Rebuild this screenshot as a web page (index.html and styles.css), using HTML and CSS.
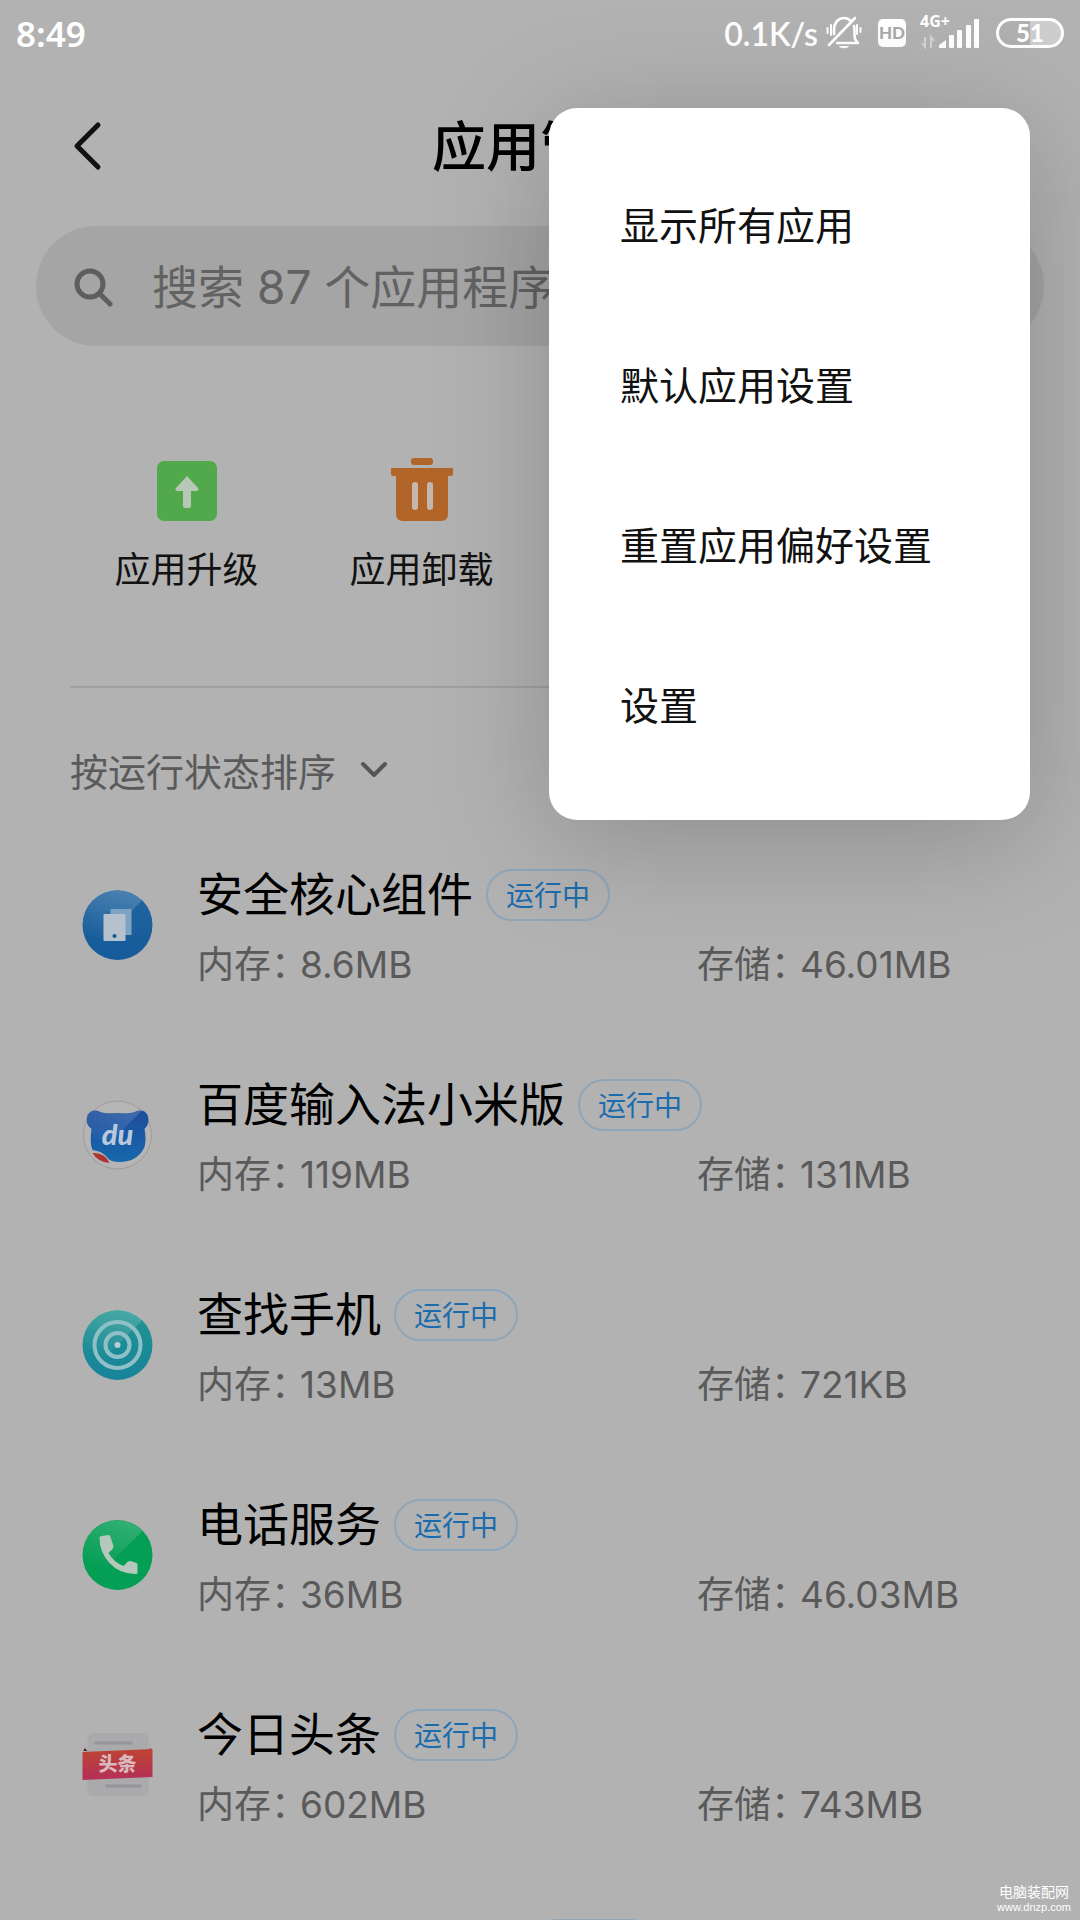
FILE: index.html
```html
<!DOCTYPE html>
<html lang="zh-CN">
<head>
<meta charset="utf-8">
<meta name="viewport" content="width=device-width, initial-scale=1">
<title>应用管理</title>
<link rel="stylesheet" href="styles.css">
</head>
<body>
<div class="screen">
  <div class="status">
    <span class="clock">8:49</span>
    <div class="status-side">
      <span class="speed">0.1K/s</span>
      <svg class="mute" viewBox="0 0 36 34" width="36" height="34" fill="none" stroke="#fff" stroke-width="2.6" stroke-linecap="round" stroke-linejoin="round">
        <path d="M8 18v-4C8 7 12 2 18 2c3 0 5 1 7 3M28 10c1 3 0 10 1 13l3 4H11"/>
        <path d="M3 29L29 2"/>
        <path d="M1.500 12v5M5 9v10M31 9v9M34.500 12v4" stroke-width="2"/>
        <path d="M13 30h10c-1 3-9 3-10 0z" fill="#fff" stroke="none"/>
      </svg>
      <span class="hd">HD</span>
      <div class="signal">
        <span class="net">4G+</span>
        <svg viewBox="0 0 60 32" width="60" height="32">
          <path d="M5 20v10l-3-4M11 31V20l3 4" fill="none" stroke="#d4d4d4" stroke-width="2"/>
          <path d="M19 31v-3l7-5v8z" fill="#fff"/>
          <g fill="#fff"><rect x="29" y="18" width="5" height="13" rx="1"/><rect x="37" y="13" width="5" height="18" rx="1"/><rect x="46" y="8" width="5" height="23" rx="1"/><rect x="54" y="2" width="5" height="29" rx="1"/></g>
        </svg>
      </div>
      <span class="battery">51</span>
    </div>
  </div>

  <header class="bar">
    <button class="back" aria-label="返回">
      <svg viewBox="0 0 30 50" width="30" height="50" fill="none" stroke="#111" stroke-width="5" stroke-linecap="round" stroke-linejoin="round"><path d="M26 4L5 25l21 21"/></svg>
    </button>
    <h1>应用管理</h1>
  </header>

  <label class="search">
    <svg viewBox="0 0 40 40" width="40" height="40" fill="none" stroke="#5e5e5e" stroke-width="5" stroke-linecap="round"><circle cx="16" cy="17" r="13"/><path d="M26 27l10 10"/></svg>
    <input type="text" placeholder="搜索 87 个应用程序" aria-label="搜索应用">
  </label>

  <nav class="actions">
    <a href="#upgrade">
      <svg viewBox="0 0 64 64" width="64" height="64"><rect x="2" y="2" width="60" height="60" rx="7" fill="#52a94c"/><path d="M32 17L43 29q2 3-2 3h-5v15q0 2-2 2h-4q-2 0-2-2V32h-5q-4 0-2-3z" fill="#b8c8b6"/></svg>
      应用升级
    </a>
    <a href="#uninstall">
      <svg viewBox="0 0 64 64" width="64" height="64" fill="#b26529"><rect x="21" y="-1" width="22" height="7" rx="3"/><path d="M2 9h60q1 0 1 1v5q0 2-2 2h-3v38q0 7-7 7H13q-7 0-7-7V17H3q-2 0-2-2v-5q0-1 1-1z"/><path d="M25 26v22M40 26v22" stroke="#c5b7ad" stroke-width="6" stroke-linecap="round"/></svg>
      应用卸载
    </a>
  </nav>

  <button class="sort">按运行状态排序
    <svg viewBox="0 0 28 18" width="28" height="18" fill="none" stroke="#555" stroke-width="4" stroke-linecap="round" stroke-linejoin="round"><path d="M3 4l11 11L25 4"/></svg>
  </button>

  <ul class="apps">
    <li>
      <svg class="app-icon" viewBox="0 0 70 70">
        <defs>
          <linearGradient id="blue" x1="0" y1="0" x2="0" y2="1"><stop offset="0" stop-color="#22659f"/><stop offset="1" stop-color="#155b9a"/></linearGradient>
          <linearGradient id="gloss" gradientUnits="userSpaceOnUse" x1="40" y1="0" x2="20" y2="50"><stop offset="0" stop-color="#fff" stop-opacity=".18"/><stop offset="1" stop-color="#fff" stop-opacity="0"/></linearGradient>
        </defs>
        <circle cx="35" cy="35" r="35" fill="url(#blue)"/><path d="M0 35A35 35 0 0 1 60 10L10 60A35 35 0 0 1 0 35z" fill="url(#gloss)"/>
        <rect x="28" y="19" width="21" height="26" fill="#7fa3c3"/><rect x="21" y="24" width="22" height="27" rx="1" fill="#b5c1cd"/><circle cx="32" cy="46" r="2" fill="#17548c"/>
      </svg>
      <div class="info">
        <div class="name"><h2>安全核心组件</h2><span class="badge">运行中</span></div>
        <div class="usage"><p>内存：<span>8.6MB</span></p><p>存储：<span>46.01MB</span></p></div>
      </div>
    </li>
    <li>
      <svg class="app-icon" viewBox="0 0 70 70">
        <defs><linearGradient id="bear" x1="0" y1="0" x2="0" y2="1"><stop offset="0" stop-color="#1e4c9c"/><stop offset="1" stop-color="#1768ad"/></linearGradient></defs>
        <circle cx="35" cy="35" r="34" fill="#b5b5b5" stroke="#a39a9a"/>
        <path d="M18 12Q23 14 35 13Q47 14 52 12Q61 8 65 15Q68 23 62 29Q64 39 62 47Q55 62 37 62Q28 62 25 58Q20 51 10 50Q7 44 9 29Q2 24 5 15Q10 8 18 12z" fill="url(#bear)"/>
        <path d="M52 12Q56 10 59 11L28 42L9 38V29Q2 24 5 15Q10 8 18 12Q23 14 35 13Q47 14 52 12z" fill="url(#gloss)"/>
        <path d="M10 53q12-1 17 10q-12-1-17-10z" fill="#ae3431"/>
        <text class="du" x="35" y="45" text-anchor="middle">du</text>
      </svg>
      <div class="info">
        <div class="name"><h2>百度输入法小米版</h2><span class="badge">运行中</span></div>
        <div class="usage"><p>内存：<span>119MB</span></p><p>存储：<span>131MB</span></p></div>
      </div>
    </li>
    <li>
      <svg class="app-icon" viewBox="0 0 70 70">
        <defs><linearGradient id="teal" x1="0" y1="0" x2="0" y2="1"><stop offset="0" stop-color="#219590"/><stop offset="1" stop-color="#17839b"/></linearGradient></defs>
        <circle cx="35" cy="35" r="35" fill="url(#teal)"/><path d="M0 35A35 35 0 0 1 60 10L10 60A35 35 0 0 1 0 35z" fill="url(#gloss)"/>
        <g fill="none" stroke="#8fc0c8" stroke-width="4"><circle cx="35" cy="35" r="23"/><circle cx="35" cy="35" r="12"/></g><circle cx="35" cy="35" r="3" fill="#b7d0d4"/>
      </svg>
      <div class="info">
        <div class="name"><h2>查找手机</h2><span class="badge">运行中</span></div>
        <div class="usage"><p>内存：<span>13MB</span></p><p>存储：<span>721KB</span></p></div>
      </div>
    </li>
    <li>
      <svg class="app-icon" viewBox="0 0 70 70">
        <circle cx="35" cy="35" r="35" fill="#049e55"/><path d="M0 35A35 35 0 0 1 60 11L10 60A35 35 0 0 1 0 35z" fill="url(#gloss)"/>
        <path d="M19 16l7-1q2 0 2 2l3 9q0 2-1 3l-4 4q5 9 15 13l4-4q1-1 3-1l6 2q1 0 1 2v8q0 1-2 1Q37 54 27 43Q17 32 17 18q0-2 2-2z" fill="#b5c8bb"/>
      </svg>
      <div class="info">
        <div class="name"><h2>电话服务</h2><span class="badge">运行中</span></div>
        <div class="usage"><p>内存：<span>36MB</span></p><p>存储：<span>46.03MB</span></p></div>
      </div>
    </li>
    <li>
      <svg class="app-icon" viewBox="0 0 70 70">
        <defs><linearGradient id="red" x1="0" y1="0" x2="0" y2="1"><stop offset="0" stop-color="#bd4532"/><stop offset="1" stop-color="#b52f58"/></linearGradient></defs>
        <rect x="5" y="3" width="61" height="63" rx="6" fill="#aaaaac"/><path d="M12 13h38M23 56h36" stroke="#959597" stroke-width="3"/>
        <path d="M2 18l3 3H1zM68 18l-3 3h4z" fill="#4d1c1c"/><path d="M0 22l70-3v28L0 50z" fill="url(#red)"/>
        <text class="toutiao" x="35" y="41" text-anchor="middle">头条</text>
      </svg>
      <div class="info">
        <div class="name"><h2>今日头条</h2><span class="badge">运行中</span></div>
        <div class="usage"><p>内存：<span>602MB</span></p><p>存储：<span>743MB</span></p></div>
      </div>
    </li>
    <li class="pending" aria-hidden="true">
      <span class="app-icon"></span>
      <div class="info">
        <div class="name"><h2></h2><span class="badge"></span></div>
        <div class="usage"></div>
      </div>
    </li>
  </ul>

  <div class="menu" role="menu">
    <button role="menuitem">显示所有应用</button>
    <button role="menuitem">默认应用设置</button>
    <button role="menuitem">重置应用偏好设置</button>
    <button role="menuitem">设置</button>
  </div>

  <div class="watermark"><span>电脑装配网</span><span class="site">www.dnzp.com</span></div>
</div>
</body>
</html>
```
FILE: styles.css
```css
* { box-sizing: border-box; margin: 0; padding: 0; }

body {
  background: #b2b2b2;
  color: #000;
  font-family: Inter, "Noto Sans CJK SC", sans-serif;
}

button, input {
  border: 0;
  background: none;
  color: inherit;
  font: inherit;
}

.screen {
  position: relative;
  display: flex;
  flex-direction: column;
  height: 100vh;
  overflow: hidden;
}

/* status bar */
.status {
  display: flex;
  flex: none;
  align-items: center;
  justify-content: space-between;
  height: 66px;
  padding: 0 16px;
  color: #fff;
}
.clock { font-family: "Noto Sans", sans-serif; font-weight: 600; font-size: 35px; }
.status-side { display: flex; align-items: center; gap: 8px; }
.speed { font-family: Lato, sans-serif; font-weight: 600; font-size: 32px; }
.hd {
  width: 28px;
  height: 28px;
  margin: 0 6px 0 8px;
  border-radius: 5px;
  background: #fff;
  color: #aaa;
  font: 900 17px/28px Lato, sans-serif;
  text-align: center;
}
.signal { position: relative; display: flex; }
.net { position: absolute; left: 0; top: -4px; font: 700 16px/16px "Open Sans", sans-serif; }
.battery {
  width: 68px;
  height: 30px;
  margin-left: 8px;
  border: 3px solid #fff;
  border-radius: 15px;
  background: linear-gradient(90deg, #b0b0b0 50%, #cdcdcd 50%);
  font: 900 24px/24px Lato, sans-serif;
  text-align: center;
}

/* title */
.bar {
  display: grid;
  grid-template-columns: 1fr auto 1fr;
  flex: none;
  align-items: center;
  height: 160px;
  padding: 0 72px;
}
.back { justify-self: start; display: flex; }
.bar h1 { padding-top: 4px; font-size: 54px; font-weight: 500; line-height: 80px; }

.search {
  display: flex;
  flex: none;
  align-items: center;
  gap: 38px;
  height: 120px;
  margin: 0 36px;
  padding: 2px 38px 0;
  border-radius: 60px;
  background: #a5a5a5;
}
.search input { flex: 1; min-width: 0; font-size: 46px; outline: 0; }
.search input::placeholder { color: #626262; opacity: 1; }

/* shortcuts */
.actions {
  display: grid;
  grid-template-columns: repeat(4, 1fr);
  flex: none;
  height: 342px;
  margin: 0 70px;
  padding-top: 113px;
  border-bottom: 2px solid #a0a0a0;
}
.actions a {
  display: flex;
  flex-direction: column;
  align-items: center;
  gap: 22px;
  padding-right: 2px;
  color: #111;
  font-size: 36px;
  line-height: 50px;
  text-decoration: none;
}
.actions svg { overflow: visible; }

.sort {
  display: flex;
  flex: none;
  align-items: center;
  align-self: flex-start;
  gap: 24px;
  height: 132px;
  padding: 30px 70px 0;
  color: #5a5a5a;
  font-size: 38px;
}

/* app list */
.apps { flex: 1; min-height: 0; overflow-y: auto; scrollbar-width: none; list-style: none; }
.apps li { display: flex; align-items: center; gap: 44px; height: 210px; padding: 0 82px; }
.app-icon { flex: none; width: 71px; height: 70px; }
.info { display: flex; flex: 1; flex-direction: column; gap: 19px; padding-top: 9px; }
.name { display: flex; align-items: center; gap: 13px; }
.name h2 { font-size: 46px; font-weight: 400; line-height: 50px; padding-bottom: 2px; }
.badge {
  min-width: 124px;
  height: 52px;
  padding: 0 18px;
  border: 2px solid #8fa5b8;
  border-radius: 26px;
  color: #1b6cae;
  font-size: 28px;
  line-height: 50px;
}
.usage { display: grid; grid-template-columns: 500px 1fr; min-height: 50px; color: #5a5a5a; font-size: 37px; line-height: 50px; }
.usage span { margin-left: -8px; }
.pending h2 { min-width: 322px; }
.du { fill: #b9c9dd; font: italic 900 29px Lato, sans-serif; }
.toutiao { fill: #d9b9bd; font: 900 19px "Noto Sans CJK SC", sans-serif; }

/* overflow menu */
.menu {
  position: absolute;
  top: 108px;
  right: 50px;
  display: flex;
  flex-direction: column;
  width: 481px;
  padding: 35px 0 37px;
  border-radius: 28px;
  background: #fff;
  box-shadow: 0 20px 120px rgba(0, 0, 0, .21);
}
.menu button { height: 160px; padding: 0 71px; color: #111; font-size: 39px; text-align: left; }

.watermark {
  position: absolute;
  right: 9px;
  bottom: 6px;
  display: flex;
  flex-direction: column;
  align-items: center;
  color: #fff;
  font-size: 14px;
  line-height: 16px;
}
.site { font-family: "Liberation Sans", sans-serif; font-size: 11px; line-height: 14px; }
```
